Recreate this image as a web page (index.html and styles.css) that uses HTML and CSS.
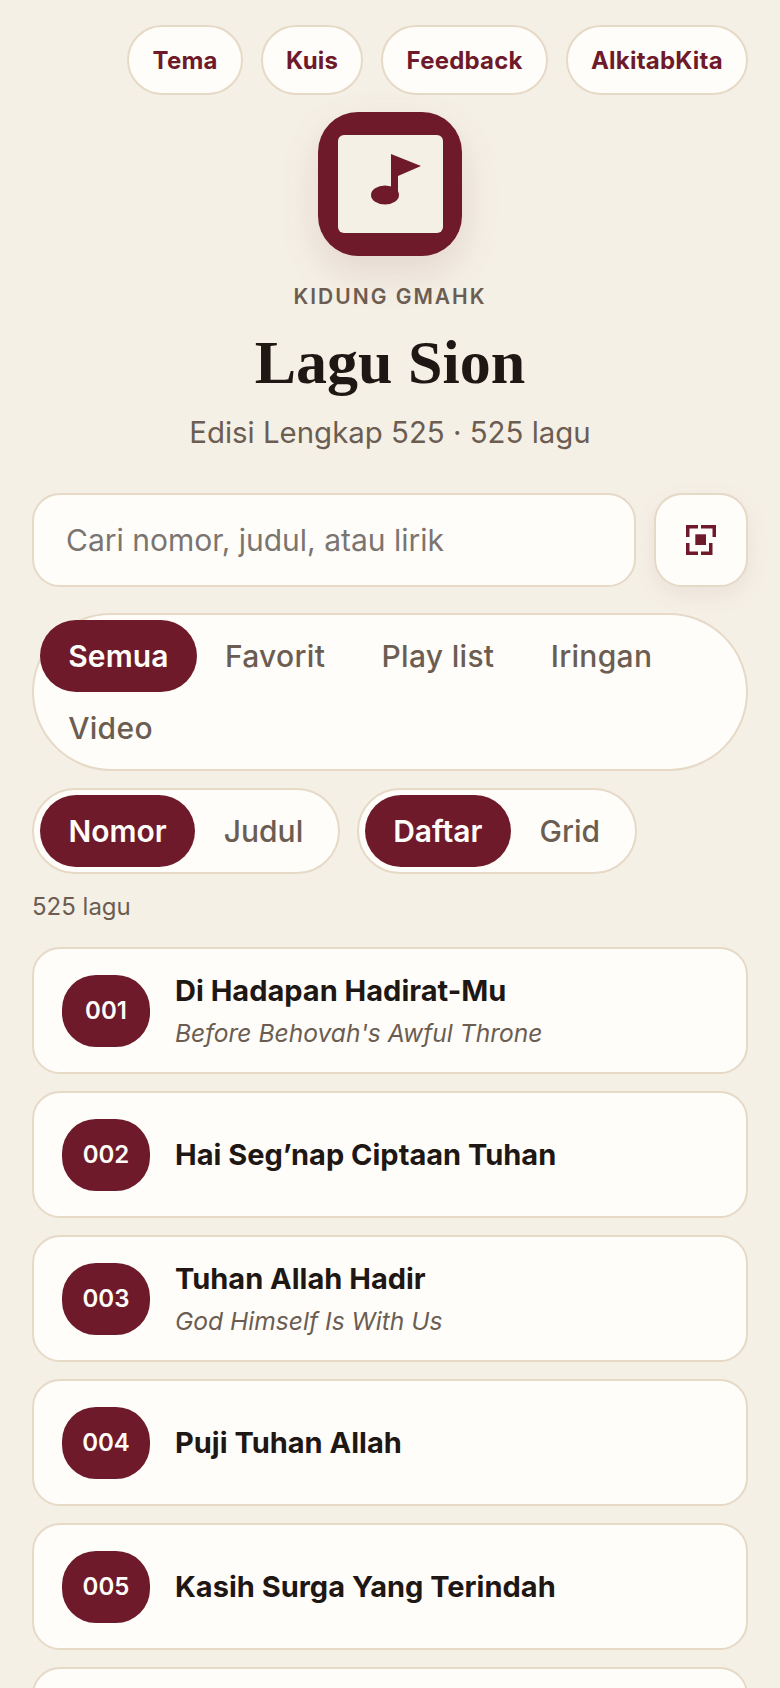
FILE: index.html
```html
<!DOCTYPE html>
<html lang="id">
<head>
    <meta charset="UTF-8">
    <meta name="viewport" content="width=device-width, initial-scale=1.0">
    <title>Lagu Sion</title>
    <link rel="stylesheet" href="styles.css">
</head>
<body>
    <nav class="topLinks">
        <a class="topLink">Tema</a>
        <a class="topLink">Kuis</a>
        <a class="topLink">Feedback</a>
        <a class="topLink">AlkitabKita</a>
    </nav>

    <header class="hero">
        <div class="logo">
            <svg viewBox="0 0 144 144" width="144" height="144">
                <rect x="20" y="23" width="105" height="98" rx="6" fill="#f5f0e6"/>
                <ellipse cx="67" cy="83" rx="14" ry="9.5" fill="#6e1a2b"/>
                <path d="M73 42 L103 54 L80 64 L80 84 L73 84 Z" fill="#6e1a2b"/>
            </svg>
        </div>
        <div class="kicker">KIDUNG GMAHK</div>
        <h1 class="title">Lagu Sion</h1>
        <p class="subtitle">Edisi Lengkap 525 · 525 lagu</p>
    </header>

    <div class="searchRow">
        <input class="searchInput" type="text" placeholder="Cari nomor, judul, atau lirik">
        <button class="scanBtn" type="button" aria-label="Pindai">
            <svg viewBox="0 0 30 30" width="30" height="30" fill="#6e1a2b">
                <path d="M0 0H12V3.5H3.5V12H0Z"/>
                <path d="M15 0H30V12H26.5V3.5H15Z"/>
                <path d="M0 18H3.5V26.5H12V30H0Z"/>
                <path d="M15 26.5H23V18H26.5V30H15Z"/>
                <rect x="9.3" y="9.3" width="10.7" height="10.7"/>
            </svg>
        </button>
    </div>

    <div class="segment tabs">
        <button class="segBtn active">Semua</button>
        <button class="segBtn">Favorit</button>
        <button class="segBtn">Play list</button>
        <button class="segBtn">Iringan</button>
        <button class="segBtn">Video</button>
    </div>

    <div class="controls">
        <div class="segment">
            <button class="segBtn active">Nomor</button>
            <button class="segBtn">Judul</button>
        </div>
        <div class="segment">
            <button class="segBtn active">Daftar</button>
            <button class="segBtn">Grid</button>
        </div>
    </div>

    <p class="count">525 lagu</p>

    <div class="songList">
        <div class="song">
            <span class="num">001</span>
            <div>
                <div class="songTitle">Di Hadapan Hadirat-Mu</div>
                <div class="songSub">Before Behovah's Awful Throne</div>
            </div>
        </div>
        <div class="song">
            <span class="num">002</span>
            <div>
                <div class="songTitle">Hai Seg’nap Ciptaan Tuhan</div>
            </div>
        </div>
        <div class="song">
            <span class="num">003</span>
            <div>
                <div class="songTitle">Tuhan Allah Hadir</div>
                <div class="songSub">God Himself Is With Us</div>
            </div>
        </div>
        <div class="song">
            <span class="num">004</span>
            <div>
                <div class="songTitle">Puji Tuhan Allah</div>
            </div>
        </div>
        <div class="song">
            <span class="num">005</span>
            <div>
                <div class="songTitle">Kasih Surga Yang Terindah</div>
            </div>
        </div>
        <div class="song"></div>
    </div>
</body>
</html>
```

FILE: styles.css
```css
html, body {
    height: 1688px;
    overflow: hidden;
}
body {
    margin: 0;
    padding: 25px 32px 0;
    box-sizing: border-box;
    background-color: #f5f0e6;
    color: #1e1713;
    font-family: Inter, "Noto Sans", sans-serif;
}
button, input {
    font-family: inherit;
}
.topLinks {
    display: flex;
    justify-content: flex-end;
    gap: 18px;
}
.topLink {
    height: 70px;
    box-sizing: border-box;
    padding: 0 23.2px;
    display: flex;
    align-items: center;
    background-color: #fffdf9;
    border: 2px solid #e6d9c6;
    border-radius: 35px;
    color: #6e1a2b;
    font-size: 24px;
    font-weight: 700;
    letter-spacing: 0.2px;
}
.hero {
    display: flex;
    flex-direction: column;
    align-items: center;
    margin-top: 17px;
}
.logo {
    width: 144px;
    height: 144px;
    border-radius: 40px;
    background-color: #6e1a2b;
    box-shadow: 0 16px 40px rgba(110, 26, 43, 0.12);
}
.logo svg {
    display: block;
}
.kicker {
    margin-top: 28px;
    font-size: 21px;
    line-height: 26px;
    font-weight: 600;
    letter-spacing: 2px;
    color: #6b5d52;
}
.title {
    margin: 16px 0 0;
    font-family: "Liberation Serif", serif;
    font-size: 62px;
    line-height: 72px;
    font-weight: 700;
}
.subtitle {
    margin: 15px 0 0;
    font-size: 29.4px;
    line-height: 40px;
    color: #6b5d52;
}
.searchRow {
    display: flex;
    gap: 18px;
    margin-top: 40px;
}
.searchInput {
    flex: 1;
    min-width: 0;
    height: 94px;
    box-sizing: border-box;
    padding: 0 32px;
    background-color: #fffdf9;
    border: 2px solid #e6d9c6;
    border-radius: 28px;
    font-size: 30px;
    outline: none;
}
.searchInput::placeholder {
    color: #7a7570;
    opacity: 1;
}
.scanBtn {
    width: 94px;
    height: 94px;
    flex: none;
    display: flex;
    align-items: center;
    justify-content: center;
    padding: 0;
    background-color: #fffdf9;
    border: 2px solid #e6d9c6;
    border-radius: 28px;
    box-shadow: 0 8px 24px rgba(110, 26, 43, 0.07);
}
.segment {
    display: inline-flex;
    flex-wrap: wrap;
    box-sizing: border-box;
    padding: 5px 6px;
    background-color: #fffdf9;
    border: 2px solid #e6d9c6;
    border-radius: 80px;
}
.tabs {
    display: flex;
    margin-top: 26px;
}
.segBtn {
    height: 72px;
    padding: 0 28.2px;
    background: none;
    border: none;
    border-radius: 36px;
    color: #6b5d52;
    font-size: 30px;
    font-weight: 500;
    letter-spacing: 0.3px;
}
.segBtn.active {
    background-color: #6e1a2b;
    color: #fffdf9;
    font-weight: 600;
    letter-spacing: 0.1px;
}
.controls {
    display: flex;
    gap: 17px;
    margin-top: 17px;
}
.controls .segBtn {
    padding: 0 28.5px;
    letter-spacing: 0;
}
.count {
    margin: 17px 0 0;
    font-size: 24px;
    line-height: 32px;
    color: #6b5d52;
}
.songList {
    display: flex;
    flex-direction: column;
    gap: 17px;
    margin-top: 24px;
}
.song {
    height: 127px;
    flex: none;
    box-sizing: border-box;
    display: flex;
    align-items: center;
    gap: 25px;
    padding: 0 28px;
    background-color: #fffdf9;
    border: 2px solid #e6d9c6;
    border-radius: 28px;
}
.num {
    width: 88px;
    height: 72px;
    flex: none;
    display: flex;
    align-items: center;
    justify-content: center;
    background-color: #6e1a2b;
    border-radius: 34px;
    color: #fffdf9;
    font-size: 24px;
    font-weight: 600;
}
.songTitle {
    font-size: 29px;
    line-height: 38px;
    font-weight: 700;
}
.songSub {
    margin-top: 6px;
    font-size: 24.6px;
    line-height: 34px;
    font-style: italic;
    color: #6b5d52;
}
```
